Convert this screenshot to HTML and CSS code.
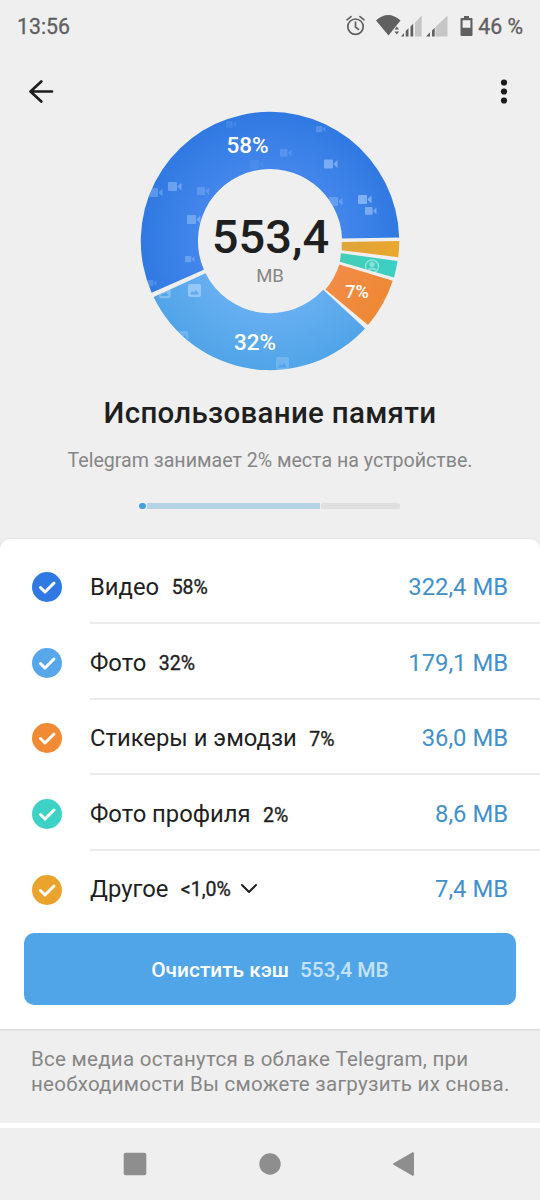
FILE: index.html
```html
<!DOCTYPE html>
<html lang="ru">
<head>
<meta charset="utf-8">
<title>Использование памяти</title>
<link rel="stylesheet" href="styles.css">
</head>
<body>
<div class="screen">
  <div class="status">
    <span class="clock">13:56</span>
    <svg class="status-icons" width="134" height="24" viewBox="342 13 134 24">
      <g fill="none" stroke="#606060" stroke-width="1.7" stroke-linecap="round">
        <circle cx="355.5" cy="25.7" r="7.7"/>
        <path d="M355.5 21v5l3 2.4M347 18.8l4-3.2M364 18.8l-4-3.2"/>
      </g>
      <path fill="#606060" d="M376 19.500Q388 8.500 400.500 19.500L388.500 34.500z"/>
      <path fill="#606060" d="M394.500 28.500l2.300-3 2.300 3zM394.500 30.500h4.600l-2.300 3z"/>
      <path fill="#c6c6c6" d="M415 21.500L421.700 14.500V35.500H415zM435.500 26L447.500 14.500V35.500H435.500z"/>
      <path fill="#606060" d="M401 35.500l3-3.500v3.500zM405.700 30l2.800-2.800v8.300H405.700zM410.500 25.500l2.700-2.700v12.700h-2.700zM426 35.500l4-4.200v4.200zM432 29.500l2.700-2.700v8.700H432z"/>
      <path fill="#606060" fill-rule="evenodd" d="M464 15h5v2h2.500q1 0 1 1v16q0 1-1 1H461.500q-1 0-1-1V18q0-1 1-1H464zM462.600 19.300v7.500h7.800v-7.500z"/>
    </svg>
    <span class="battery">46 %</span>
  </div>
  <div class="toolbar">
    <svg width="28" height="28" viewBox="27 78 28 28" fill="none" stroke="#1c1c1c" stroke-width="2.700" stroke-linecap="round" stroke-linejoin="round"><path d="M52 91.500H30.800M41.300 81.500L30.500 91.500L41.300 101.500"/></svg>
    <svg width="10" height="28" viewBox="499 78 10 28" fill="#1c1c1c"><circle cx="504" cy="82.500" r="3.100"/><circle cx="504" cy="91.500" r="3.100"/><circle cx="504" cy="100.500" r="3.100"/></svg>
  </div>

  <svg class="chart" width="264" height="264" viewBox="138 109 264 264">
    <defs>
      <radialGradient id="video" gradientUnits="userSpaceOnUse" cx="270" cy="241" r="130"><stop offset=".5" stop-color="#4588ec"/><stop offset="1" stop-color="#3079e2"/></radialGradient>
      <radialGradient id="photo" gradientUnits="userSpaceOnUse" cx="270" cy="241" r="130"><stop offset=".5" stop-color="#69b0f2"/><stop offset="1" stop-color="#50a4e8"/></radialGradient>
      <radialGradient id="sticker" gradientUnits="userSpaceOnUse" cx="270" cy="241" r="130"><stop offset=".5" stop-color="#f28b4a"/><stop offset="1" stop-color="#ee8934"/></radialGradient>
      <radialGradient id="profile" gradientUnits="userSpaceOnUse" cx="270" cy="241" r="130"><stop offset=".5" stop-color="#45cdb5"/><stop offset="1" stop-color="#3ccfc4"/></radialGradient>
      <radialGradient id="other" gradientUnits="userSpaceOnUse" cx="270" cy="241" r="130"><stop offset=".5" stop-color="#e0a33e"/><stop offset="1" stop-color="#e9a72c"/></radialGradient>
      <clipPath id="videoClip"><path d="M151.600 292.700A129.200 129.200 0 1 1 399.150 237.500L342 238.500A72.050 72.050 0 1 0 203.900 269.800z"/></clipPath>
      <clipPath id="photoClip"><path d="M153.600 297A129.200 129.200 0 0 0 365 328.500L323.200 289.800A72.150 72.150 0 0 1 205.500 273.300z"/></clipPath>
      <clipPath id="profileClip"><path d="M341 253.200L397.500 261A129 129 0 0 1 394 277.500L339.800 261.800z"/></clipPath>
      <path id="camera" d="M0 1q0-1 1-1h7q1 0 1 1v7q0 1-1 1H1q-1 0-1-1zM9.800 4l3.700-3.500v8L9.800 5z"/>
      <path id="picture" fill-rule="evenodd" d="M2 0h9q2 0 2 2v9q0 2-2 2H2q-2 0-2-2V2q0-2 2-2zM2 10.500h9L8 6 5.500 8.500 4 7z"/>
    </defs>
    <path fill="url(#video)" d="M151.600 292.700A129.200 129.200 0 1 1 399.150 237.500L342 238.500A72.050 72.050 0 1 0 203.900 269.800z"/>
    <path fill="url(#photo)" d="M153.600 297A129.200 129.200 0 0 0 365 328.500L323.200 289.800A72.150 72.150 0 0 1 205.500 273.300z"/>
    <path fill="url(#sticker)" d="M339.300 264.500L392.700 280.700A129.300 129.300 0 0 1 368 325L325.500 289.500A72 72 0 0 0 339.300 264.500z"/>
    <path fill="url(#profile)" d="M341 253.200L397.500 261A129 129 0 0 1 394 277.500L339.800 261.800z"/>
    <path fill="url(#other)" d="M341.700 242L399.200 241A129 129 0 0 1 398.300 257.200L341.700 250.300z"/>
    <g clip-path="url(#videoClip)" fill="#b9d8ff">
      <use href="#camera" x="168" y="182" opacity=".4"/>
      <use href="#camera" x="149" y="188" opacity=".3"/>
      <use href="#camera" transform="translate(197 187) scale(.9)" opacity=".25"/>
      <use href="#camera" x="187" y="215" opacity=".4"/>
      <use href="#camera" transform="translate(185 256) scale(.7)" opacity=".35"/>
      <use href="#camera" transform="translate(147 280) scale(.7)" opacity=".25"/>
      <use href="#camera" transform="translate(226 121) scale(.75)" opacity=".12"/>
      <use href="#camera" x="250" y="160" opacity=".08"/>
      <use href="#camera" transform="translate(316 126) scale(.7)" opacity=".25"/>
      <use href="#camera" transform="translate(280 149) scale(.85)" opacity=".2"/>
      <use href="#camera" x="324" y="159" transform="translate(0 .5)" opacity=".5"/>
      <use href="#camera" x="329" y="197" opacity=".3"/>
      <use href="#camera" x="358" y="195" opacity=".55"/>
      <use href="#camera" transform="translate(365 207) scale(.85)" opacity=".5"/>
    </g>
    <g clip-path="url(#photoClip)" fill="#c7e4ff">
      <use href="#picture" x="188" y="284" opacity=".5"/>
      <use href="#picture" transform="translate(159 286.500) scale(.9)" opacity=".4"/>
      <use href="#picture" transform="translate(179 331) scale(.7)" opacity=".25"/>
      <use href="#picture" x="276" y="357" opacity=".25"/>
    </g>
    <g clip-path="url(#profileClip)" fill="none" stroke="#b2eee5" opacity=".65">
      <circle cx="372" cy="266.500" r="6.500" stroke-width="1.500"/>
      <circle cx="372" cy="264.500" r="2.200" fill="#b2eee5"/><path d="M368 270q4-3 8 0" stroke-width="2"/>
    </g>
    <g class="share" text-anchor="middle">
      <text x="247.500" y="152.500">58%</text>
      <text x="255" y="349.500">32%</text>
      <text class="share-small" x="357" y="297.800">7%</text>
    </g>
    <text class="total" x="270.500" y="252.500" text-anchor="middle">553,4</text>
    <text class="unit" x="270" y="282" text-anchor="middle">MB</text>
  </svg>

  <h1 class="title">Использование памяти</h1>
  <p class="subtitle">Telegram занимает 2% места на устройстве.</p>
  <div class="usage"><i class="usage-app"></i><i class="usage-busy"></i><i class="usage-free"></i></div>

  <div class="card">
    <div class="row"><svg class="check check-video" viewBox="0 0 30 30"><path d="M8.500 15.500l4.500 4.500 9-9"/></svg><div class="cell"><span class="name">Видео</span><span class="percent">58%</span><span class="size">322,4 MB</span></div></div>
    <div class="row"><svg class="check check-photo" viewBox="0 0 30 30"><path d="M8.500 15.500l4.500 4.500 9-9"/></svg><div class="cell"><span class="name">Фото</span><span class="percent">32%</span><span class="size">179,1 MB</span></div></div>
    <div class="row"><svg class="check check-sticker" viewBox="0 0 30 30"><path d="M8.500 15.500l4.500 4.500 9-9"/></svg><div class="cell"><span class="name">Стикеры и эмодзи</span><span class="percent">7%</span><span class="size">36,0 MB</span></div></div>
    <div class="row"><svg class="check check-profile" viewBox="0 0 30 30"><path d="M8.500 15.500l4.500 4.500 9-9"/></svg><div class="cell"><span class="name">Фото профиля</span><span class="percent">2%</span><span class="size">8,6 MB</span></div></div>
    <div class="row"><svg class="check check-other" viewBox="0 0 30 30"><path d="M8.500 15.500l4.500 4.500 9-9"/></svg><div class="cell"><span class="name">Другое</span><span class="percent">&lt;1,0%</span><svg class="chevron" width="18" height="12" viewBox="0 0 18 12"><path d="M2 2l7 7 7-7"/></svg><span class="size">7,4 MB</span></div></div>
    <div class="clear"><span>Очистить кэш</span><span class="clear-size">553,4 MB</span></div>
  </div>
  <p class="note">Все медиа останутся в облаке Telegram, при<br>необходимости Вы сможете загрузить их снова.</p>
  <div class="nav">
    <svg width="540" height="72" viewBox="0 1128 540 72" fill="#8e8e8e"><rect x="123.700" y="1152.700" width="22.600" height="22.600" rx="2"/><circle cx="270" cy="1164" r="10.700"/><path stroke="#8e8e8e" stroke-width="2" stroke-linejoin="round" d="M394 1164L413 1153.200V1174.800z"/></svg>
  </div>
</div>
</body>
</html>
```
FILE: styles.css
```css
* { box-sizing: border-box; }
body { margin: 0; background: #efefef; font-family: Roboto, sans-serif; color: #1f1f1f; }
.screen { width: 540px; height: 1200px; display: flex; flex-direction: column; overflow: hidden; }
.screen > * { flex: none; }
.status { height: 50px; padding: 2px 17px 0; display: flex; align-items: center; color: #606060; font-size: 21.300px; }
.clock { -webkit-text-stroke: .3px; }
.status-icons { margin-left: auto; }
.battery { margin-left: 2px; -webkit-text-stroke: .3px; }
.toolbar { height: 59px; padding: 28px 31px 0 27px; display: flex; justify-content: space-between; align-items: flex-start; }
.chart { align-self: center; }
.share { fill: #fff; font-size: 22.500px; font-weight: 500; }
.share-small { font-size: 18px; }
.total { font-size: 47px; font-weight: 500; fill: #1f1f1f; }
.unit { font-size: 18.500px; fill: #868686; }
.title { margin: 22px 0 0; height: 36px; line-height: 36px; font-size: 29.500px; letter-spacing: .3px; font-weight: 500; text-align: center; white-space: nowrap; }
.subtitle { margin: 16px 0 0; height: 28px; line-height: 28px; font-size: 19.600px; color: #868686; text-align: center; white-space: nowrap; }
.usage { width: 261px; height: 6px; margin: 28px 0 0 139px; display: flex; gap: 1px; }
.usage-app { width: 6.500px; border-radius: 3px; background: #419fe2; }
.usage-busy { width: 173.500px; background: #b5d2e6; }
.usage-free { flex: 1; background: #dfdfdf; border-radius: 0 2px 2px 0; }
.card { height: 490px; margin-top: 30px; padding-top: 9px; background: #fff; border-radius: 10px 10px 0 0; box-shadow: 0 0 2px #d8d8d8; }
.row { display: flex; align-items: center; height: 75.750px; padding-left: 32px; }
.check { width: 30px; height: 30px; border-radius: 50%; margin: 2px 28px 0 0; flex: none; fill: none; stroke: #fff; stroke-width: 3; stroke-linecap: round; stroke-linejoin: round; }
.check-video { background: #3079e2; }
.check-photo { background: #58a7eb; }
.check-sticker { background: #f08a34; }
.check-profile { background: #3ed1c5; }
.check-other { background: #eaa42d; }
.cell { flex: 1; height: 100%; padding: 4px 32px 0 0; display: flex; align-items: center; border-bottom: 2px solid #ebebeb; font-size: 23.800px; white-space: nowrap; }
.row:nth-child(5) .cell { border-bottom: 0; padding-top: 0; }
.percent { margin-left: 12.500px; font-size: 19.500px; -webkit-text-stroke: .35px; padding-top: 2px; }
.chevron { margin-left: 9px; fill: none; stroke: #1f1f1f; stroke-width: 2; stroke-linecap: round; stroke-linejoin: round; }
.size { margin-left: auto; color: #4190cc; }
.clear { height: 72px; margin: 6px 24px 0; display: flex; align-items: center; justify-content: center; gap: 11px; border-radius: 10px; background: #50a5e9; color: #fff; font-size: 20.900px; font-weight: 500; padding-top: 3px; }
.clear-size { color: #c4e2f8; }
.note { margin: 0; height: 94px; padding: 16px 31px 0; border-top: 2px solid #e3e3e3; color: #868686; font-size: 20.500px; letter-spacing: .27px; line-height: 25px; white-space: nowrap; }
.nav { height: 77px; border-top: 5px solid #fff; }
.nav svg { display: block; }
```
